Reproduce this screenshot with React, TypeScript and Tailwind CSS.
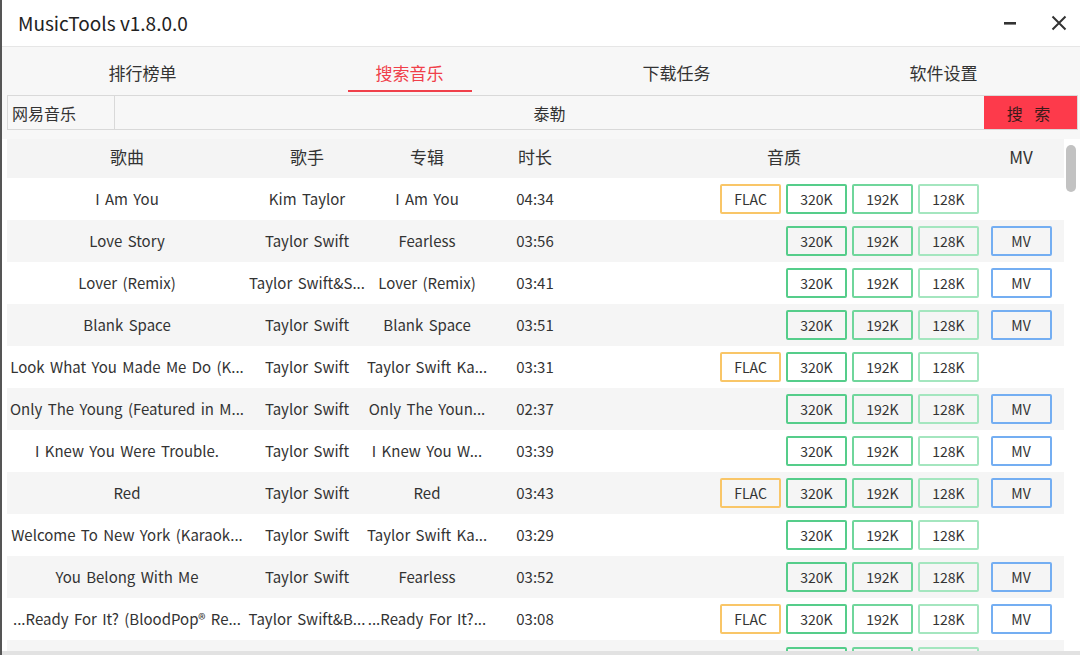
import React from "react";

type Row = {
  song: string;
  artist: string;
  album: string;
  time: string;
  flac: boolean;
  mv: boolean;
};

const ROWS: Row[] = [
  { song: "I Am You", artist: "Kim Taylor", album: "I Am You", time: "04:34", flac: true, mv: false },
  { song: "Love Story", artist: "Taylor Swift", album: "Fearless", time: "03:56", flac: false, mv: true },
  { song: "Lover (Remix)", artist: "Taylor Swift&S...", album: "Lover (Remix)", time: "03:41", flac: false, mv: true },
  { song: "Blank Space", artist: "Taylor Swift", album: "Blank Space", time: "03:51", flac: false, mv: true },
  { song: "Look What You Made Me Do (K...", artist: "Taylor Swift", album: "Taylor Swift Ka...", time: "03:31", flac: true, mv: false },
  { song: "Only The Young (Featured in M...", artist: "Taylor Swift", album: "Only The Youn...", time: "02:37", flac: false, mv: true },
  { song: "I Knew You Were Trouble.", artist: "Taylor Swift", album: "I Knew You W...", time: "03:39", flac: false, mv: true },
  { song: "Red", artist: "Taylor Swift", album: "Red", time: "03:43", flac: true, mv: true },
  { song: "Welcome To New York (Karaok...", artist: "Taylor Swift", album: "Taylor Swift Ka...", time: "03:29", flac: false, mv: false },
  { song: "You Belong With Me", artist: "Taylor Swift", album: "Fearless", time: "03:52", flac: false, mv: true },
  { song: "...Ready For It? (BloodPop® Re...", artist: "Taylor Swift&B...", album: "...Ready For It?...", time: "03:08", flac: true, mv: true },
];

const TABS = ["排行榜单", "搜索音乐", "下载任务", "软件设置"];

function Btn({ label, border }: { label: string; border: string }) {
  return (
    <div
      className={`flex h-[30px] w-[61px] items-center justify-center rounded-[2px] border-2 text-[14px] text-[#333] ${border}`}
    >
      {label}
    </div>
  );
}

export default function App() {
  return (
    <div
      className="flex h-[655px] w-[1080px] flex-col overflow-hidden border-l-2 border-[#555] bg-white text-[#333]"
      style={{ fontFamily: '"Noto Sans CJK SC", "Noto Sans", sans-serif' }}
    >
      {/* title bar */}
      <div className="flex h-[47px] shrink-0 items-center border-b border-[#e6e6e6] bg-white pl-[16px]">
        <span className="text-[19px] text-[#222]">MusicTools v1.8.0.0</span>
        <div className="ml-auto flex items-center gap-[34px] pr-[13px]">
          <svg width="14" height="14" viewBox="0 0 14 14">
            <rect x="1" y="6" width="12" height="2.6" fill="#333" />
          </svg>
          <svg width="16" height="16" viewBox="0 0 16 16">
            <path d="M1.5 1.5 L14.5 14.5 M14.5 1.5 L1.5 14.5" stroke="#333" strokeWidth="2" />
          </svg>
        </div>
      </div>

      <div className="flex min-h-0 flex-1 flex-col bg-[#f7f7f7]">
        {/* tabs */}
        <div className="ml-[7px] mr-[3px] grid h-[48px] shrink-0 grid-cols-4">
          {TABS.map((t, i) => (
            <div key={t} className="flex flex-col items-center">
              <div
                className={`mt-[14px] text-[17px] leading-[24px] ${
                  i === 1 ? "text-[#f0404a]" : "text-[#333]"
                }`}
              >
                {t}
              </div>
              {i === 1 && <div className="mt-[5px] h-[2px] w-[124px] bg-[#f0404a]" />}
            </div>
          ))}
        </div>

        {/* search row */}
        <div className="ml-[5px] mr-[2px] flex h-[35px] shrink-0 border border-[#d9d9d9] bg-[#f7f7f7]">
          <div className="flex w-[107px] items-center border-r border-[#d9d9d9] pl-[4px] text-[16px]">
            网易音乐
          </div>
          <div className="flex flex-1 items-center justify-center text-[16px]">泰勒</div>
          <div className="flex w-[93px] items-center justify-center bg-[#fd3a4b] text-[16px] tracking-[4px] text-[#3a1a1a]">
            搜 索
          </div>
        </div>

        {/* table */}
        <div className="mt-[9px] flex min-h-0 flex-1 overflow-hidden bg-white pl-[5px]">
          <div className="flex w-[1057px] flex-col">
            <div className="flex h-[39px] shrink-0 items-center bg-[#f4f4f4] pb-[3px] text-[17px]">
              <div className="w-[240px] text-center">歌曲</div>
              <div className="w-[120px] text-center">歌手</div>
              <div className="w-[120px] text-center">专辑</div>
              <div className="w-[96px] text-center">时长</div>
              <div className="w-[402px] text-center">音质</div>
              <div className="w-[72px] text-center">MV</div>
            </div>
            {ROWS.map((r, i) => (
              <div
                key={i}
                className={`flex h-[42px] shrink-0 items-center text-[15px] [word-spacing:2px] ${
                  i % 2 === 0 ? "bg-white" : "bg-[#f5f5f5]"
                }`}
              >
                <div className="w-[240px] overflow-hidden whitespace-nowrap text-center">{r.song}</div>
                <div className="w-[120px] overflow-hidden whitespace-nowrap text-center">{r.artist}</div>
                <div className="w-[120px] overflow-hidden whitespace-nowrap text-center">{r.album}</div>
                <div className="w-[96px] text-center">{r.time}</div>
                <div className="flex w-[402px] justify-end gap-[5px] pr-[6px]">
                  {r.flac && <Btn label="FLAC" border="border-[#f9c668]" />}
                  <Btn label="320K" border="border-[#55cd8a]" />
                  <Btn label="192K" border="border-[#6fd69b]" />
                  <Btn label="128K" border="border-[#a4e6bf]" />
                </div>
                <div className="flex w-[72px] justify-center">
                  {r.mv && <Btn label="MV" border="border-[#74aef2]" />}
                </div>
              </div>
            ))}
            {/* partially visible next row */}
            <div className="flex h-[42px] shrink-0 items-start bg-[#f5f5f5] pt-[7px]">
              <div className="flex w-[978px] justify-end gap-[5px] pr-[6px]">
                <div className="h-[30px] w-[61px] rounded-[2px] border-2 border-[#55cd8a]" />
                <div className="h-[30px] w-[61px] rounded-[2px] border-2 border-[#6fd69b]" />
                <div className="h-[30px] w-[61px] rounded-[2px] border-2 border-[#a4e6bf]" />
              </div>
            </div>
          </div>
          <div className="flex w-[14px] justify-center pt-[6px]">
            <div className="h-[47px] w-[10px] rounded-[5px] bg-[#c2c2c2]" />
          </div>
        </div>
        <div className="h-[4px] shrink-0 bg-[#e2e2e2]" />
      </div>
    </div>
  );
}
